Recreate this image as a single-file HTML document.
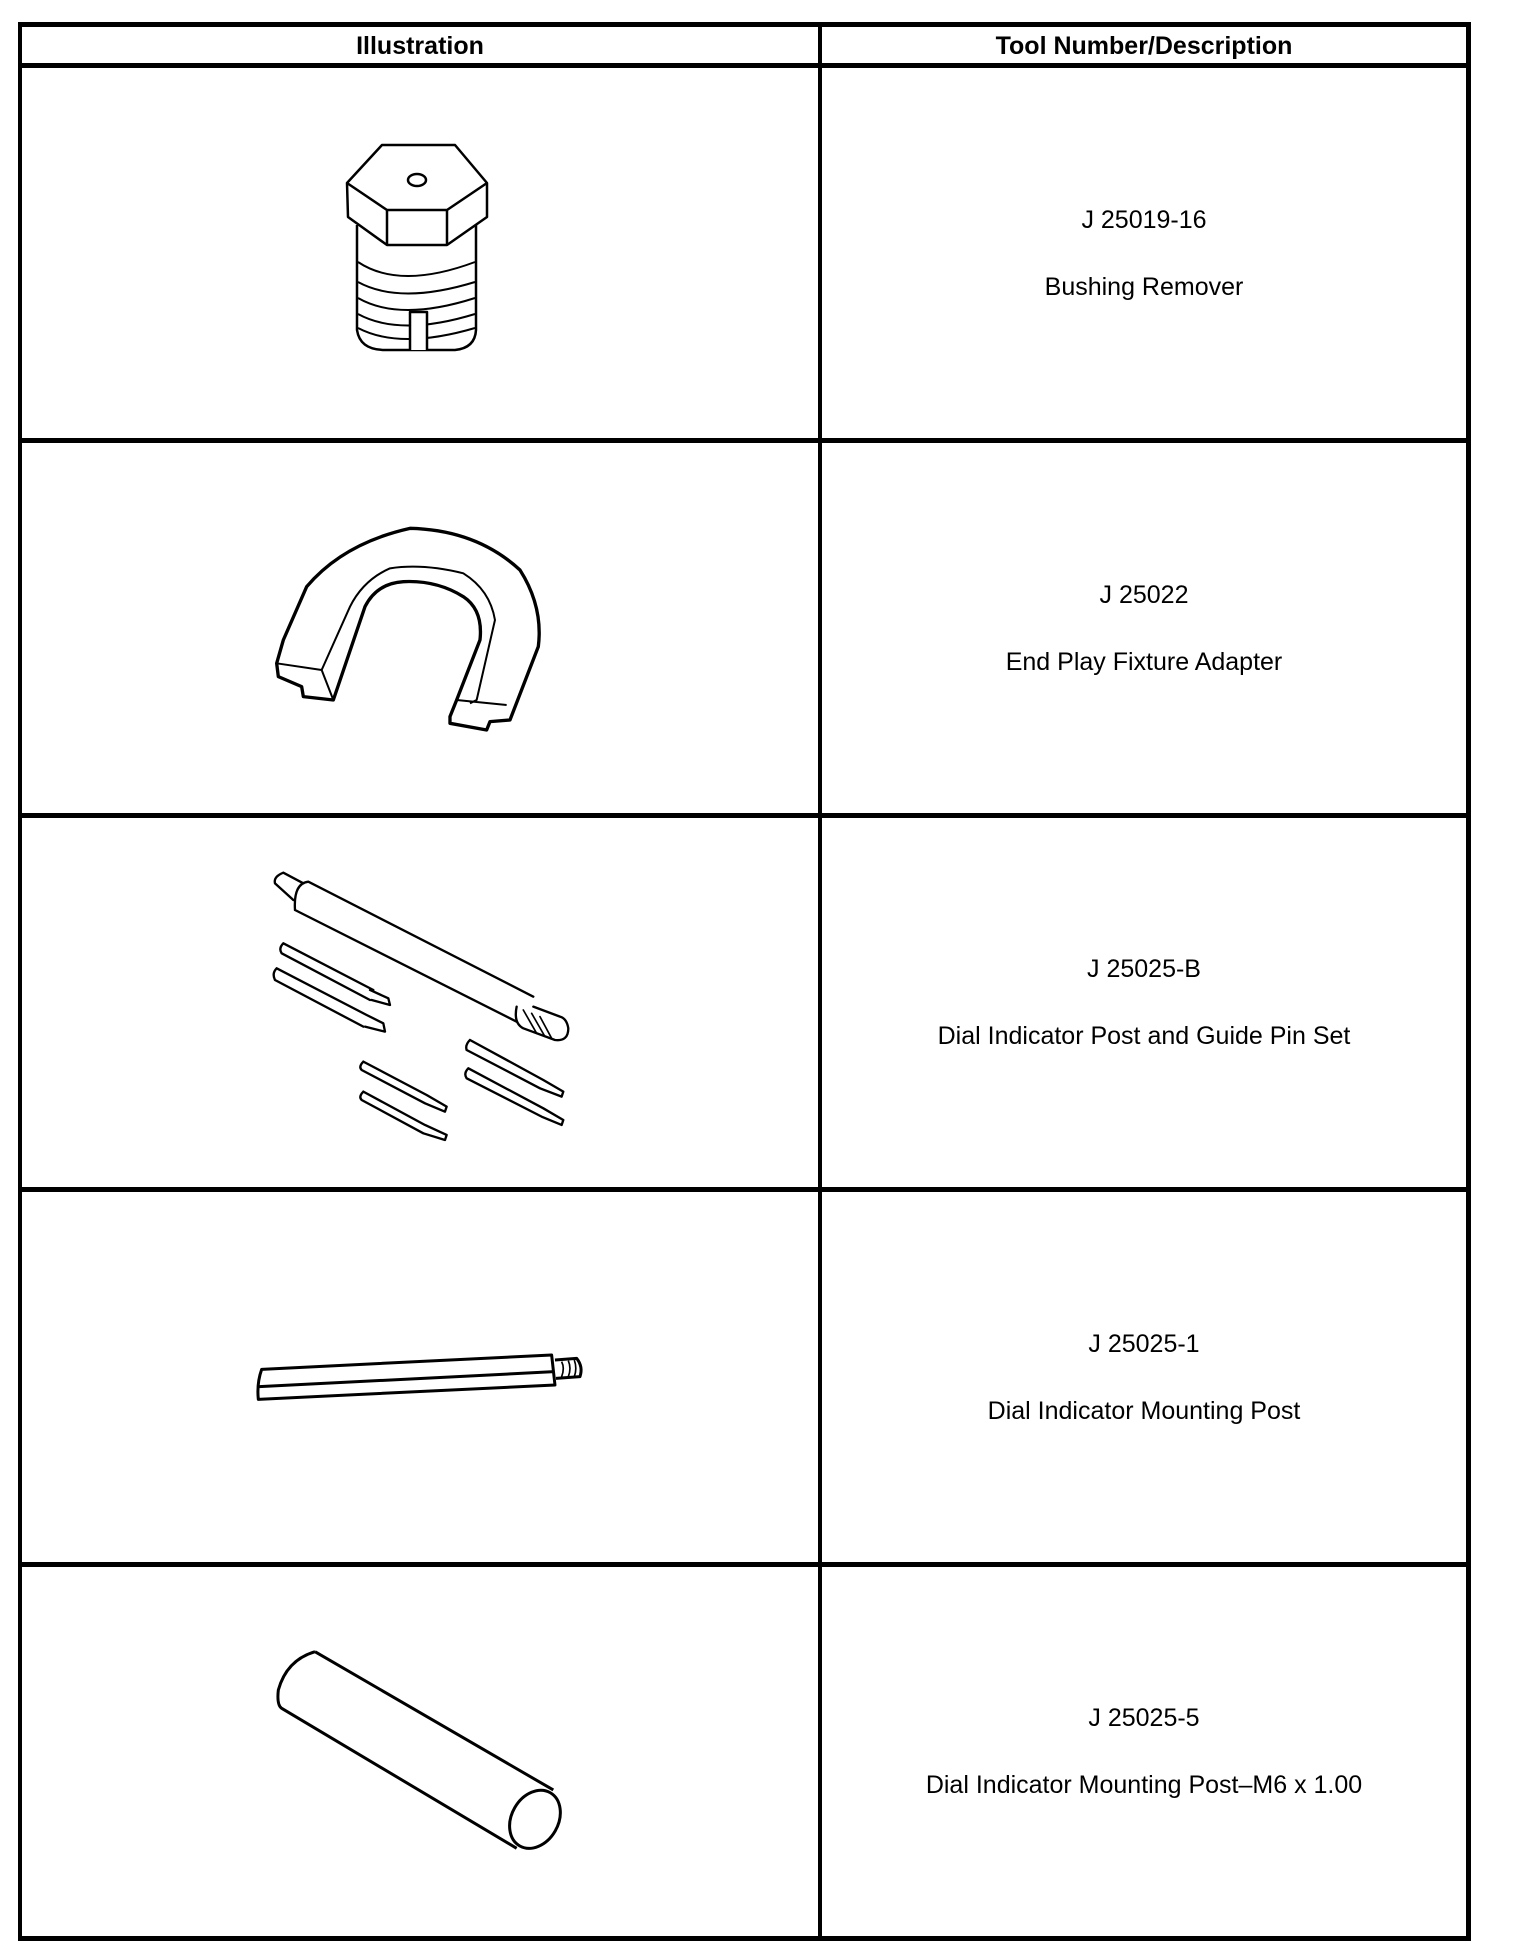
<!DOCTYPE html>
<html><head><meta charset="utf-8"><style>
html,body{margin:0;padding:0;background:#fff;}
body{width:1536px;height:1960px;position:relative;overflow:hidden;font-family:"Liberation Sans",Arial,sans-serif;}
svg{position:absolute;left:0;top:0;}
</style></head><body>
<svg width="1536" height="1960" viewBox="0 0 1536 1960" xmlns="http://www.w3.org/2000/svg">
<g fill="#000">
<rect x="18" y="22" width="1453" height="5"/>
<rect x="18" y="63" width="1453" height="5"/>
<rect x="18" y="438" width="1453" height="5"/>
<rect x="18" y="813" width="1453" height="5"/>
<rect x="18" y="1187" width="1453" height="5"/>
<rect x="18" y="1562" width="1453" height="5"/>
<rect x="18" y="1936" width="1453" height="5"/>
<rect x="18" y="22" width="4" height="1919"/>
<rect x="1466" y="22" width="5" height="1919"/>
<rect x="818" y="22" width="4" height="1919"/>
</g>
<g font-family="Liberation Sans, Arial, sans-serif" text-anchor="middle" fill="#000">
<text x="420" y="54" font-size="25" font-weight="bold">Illustration</text>
<text x="1144" y="54" font-size="25" font-weight="bold">Tool Number/Description</text>
<text x="1144" y="228" font-size="25">J 25019-16</text>
<text x="1144" y="295" font-size="25">Bushing Remover</text>
<text x="1144" y="603" font-size="25">J 25022</text>
<text x="1144" y="670" font-size="25">End Play Fixture Adapter</text>
<text x="1144" y="977" font-size="25">J 25025-B</text>
<text x="1144" y="1044" font-size="25">Dial Indicator Post and Guide Pin Set</text>
<text x="1144" y="1352" font-size="25">J 25025-1</text>
<text x="1144" y="1419" font-size="25">Dial Indicator Mounting Post</text>
<text x="1144" y="1726" font-size="25">J 25025-5</text>
<text x="1144" y="1793" font-size="25">Dial Indicator Mounting Post–M6 x 1.00</text>
</g>
<!-- bushing -->
<g fill="none" stroke="#000" stroke-width="2.5" stroke-linejoin="round">
<path d="M382,145 L455,145 L487,183 L487,217 L447,245 L387,245 L348,217 L347,183 Z"/>
<path d="M347,183 L387,210 L447,210 L487,183"/>
<path d="M387,210 L387,245 M447,210 L447,245"/>
<ellipse cx="417" cy="180" rx="9" ry="6"/>
<path d="M357,225 L357,330 Q360,350 385,350 L455,350 Q475,348 476,330 L476,225"/>
<path d="M358,262 Q400,290 475,262 M358,282 Q400,305 475,282 M358,298 Q400,322 475,298 M358,314 Q400,337 475,314 M358,328 Q400,350 475,328" stroke-width="2"/>
<path d="M410,350 L410,312 L427,312 L427,350" fill="#fff"/>
</g>
<!-- horseshoe -->
<g transform="translate(250,500) scale(0.3333)" fill="none" stroke="#000" stroke-width="10" stroke-linejoin="round">
<path d="M80,490 L100,420 L170,260 Q280,130 480,85 Q680,90 810,210 Q880,320 865,440 L780,660 L720,665 L710,690 L600,670 L600,650 L620,600 L690,420 Q700,330 640,290 Q560,240 460,245 Q380,250 345,320 L250,600 L160,590 L155,560 L85,530 Z"/>
<path d="M80,490 L215,510 L250,600 M215,510 L300,320 Q340,240 420,205 Q520,190 640,220 Q720,270 735,360 L680,600 L660,610 M620,600 L770,615" stroke-width="6"/>
</g>
<!-- pins -->
<g transform="translate(250,850) scale(0.3333)" fill="none" stroke="#000" stroke-width="7" stroke-linecap="round" stroke-linejoin="round">
<path d="M100,68 L160,100 M75,100 Q70,80 100,68 M75,100 L130,150"/>
<path d="M175,95 L850,440 M135,180 L800,515 M175,95 Q130,100 135,180"/>
<path d="M800,470 Q790,520 820,535 L915,570 Q955,575 955,535 Q950,505 930,500 L850,470"/>
<path d="M820,480 L860,550 M845,490 L885,560 M870,500 L905,565" stroke-width="5"/>
<path d="M100,280 L370,420 M95,310 L360,450 M100,280 Q85,295 95,310 M360,420 L415,445 L420,465 L365,450"/>
<path d="M80,355 L350,495 M75,390 L340,530 M80,355 Q65,370 75,390 M350,495 L400,520 L405,545 L345,530"/>
<path d="M340,635 L530,735 M335,660 L525,760 M340,635 Q325,650 335,660 M530,735 L590,770 L585,785 L525,760"/>
<path d="M340,725 L525,825 M335,750 L520,850 M340,725 Q325,740 335,750 M525,825 L590,855 L585,870 L520,850"/>
<path d="M660,570 L880,690 M650,600 L870,715 M660,570 Q645,585 650,600 M880,690 L940,725 L935,740 L870,715"/>
<path d="M655,655 L880,775 M650,685 L875,800 M655,655 Q640,670 650,685 M880,775 L940,810 L935,825 L875,800"/>
</g>
<!-- rod -->
<g transform="translate(240,1330) scale(0.3333)" fill="none" stroke="#000" stroke-width="9" stroke-linejoin="round">
<path d="M65,118 L935,75 L945,165 L55,208 Q50,160 65,118 Z"/>
<path d="M58,170 L942,125"/>
<path d="M945,90 L1010,85 Q1030,110 1020,140 L948,145"/>
<path d="M965,95 Q975,115 965,140 M985,92 Q995,115 985,140 M1003,90 Q1012,115 1003,140" stroke-width="5"/>
</g>
<!-- cylinder -->
<g transform="translate(260,1630) scale(0.3333)" fill="none" stroke="#000" stroke-width="9" stroke-linejoin="round">
<path d="M165,65 L880,480 M65,235 L770,655 M165,65 Q80,90 55,180 Q50,225 65,235"/>
<ellipse cx="825" cy="568" rx="70" ry="92" transform="rotate(30 825 568)"/>
</g>
</svg>
</body></html>
